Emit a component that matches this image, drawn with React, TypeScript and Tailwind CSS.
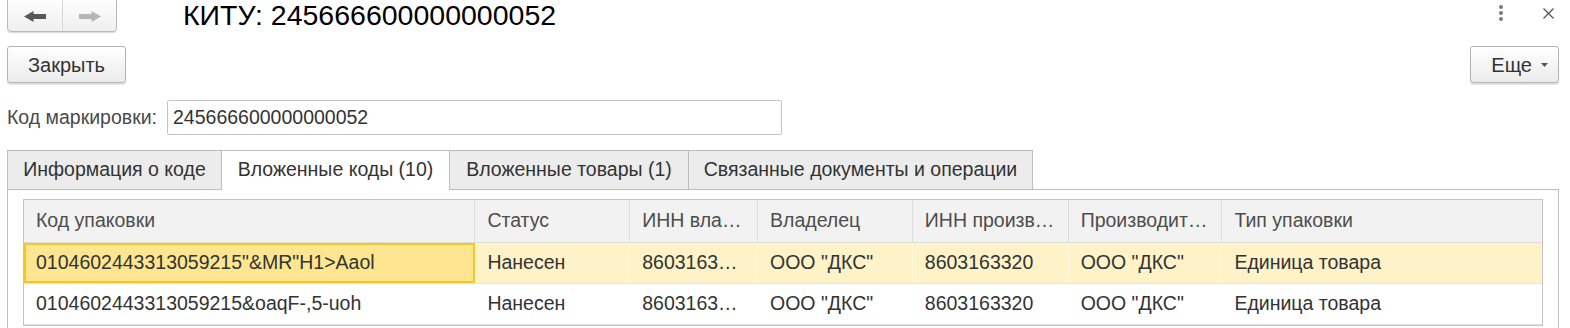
import React from "react";

const cols = [
  { title: "Код упаковки", w: 452 },
  { title: "Статус", w: 155 },
  { title: "ИНН вла…", w: 128 },
  { title: "Владелец", w: 155 },
  { title: "ИНН произв…", w: 156 },
  { title: "Производит…", w: 154 },
  { title: "Тип упаковки", w: 320 },
];

const rows = [
  ["0104602443313059215\"&MR\"H1>Aaol", "Нанесен", "8603163…", "ООО \"ДКС\"", "8603163320", "ООО \"ДКС\"", "Единица товара"],
  ["0104602443313059215&oaqF-,5-uoh", "Нанесен", "8603163…", "ООО \"ДКС\"", "8603163320", "ООО \"ДКС\"", "Единица товара"],
];

function ArrowLeft({ color }: { color: string }) {
  return (
    <svg width="22" height="11" viewBox="0 0 22 11">
      <path d="M0 5.5 L9.5 0 L9.5 3 L22 3 L22 8 L9.5 8 L9.5 11 Z" fill={color} />
    </svg>
  );
}
function ArrowRight({ color }: { color: string }) {
  return (
    <svg width="22" height="11" viewBox="0 0 22 11">
      <path d="M22 5.5 L12.5 0 L12.5 3 L0 3 L0 8 L12.5 8 L12.5 11 Z" fill={color} />
    </svg>
  );
}

export default function App() {
  return (
    <div
      className="w-[1570px] h-[328px] bg-white overflow-hidden text-[#333]"
      style={{ fontFamily: '"Liberation Sans", Arial, sans-serif' }}
    >
      {/* top bar */}
      <div className="flex items-start h-[40px]">
        <div className="ml-[7px] mt-[-3px] flex h-[35px] w-[110px] rounded-b-[4px] border border-[#b9b9b9] bg-gradient-to-b from-white to-[#efefef] shadow-[0_1px_1px_rgba(0,0,0,0.15)]">
          <div className="flex w-[55px] items-center justify-center border-r border-[#d6d6d6] pt-[3px]">
            <ArrowLeft color="#595959" />
          </div>
          <div className="flex flex-1 items-center justify-center pt-[3px]">
            <ArrowRight color="#b5b5b5" />
          </div>
        </div>
        <div className="ml-[66px] text-[28.5px] leading-[30px] text-black whitespace-nowrap">
          КИТУ: 245666600000000052
        </div>
        <div className="flex-1" />
        <div className="mt-[5px] mr-[40px] flex flex-col gap-[2px] items-center">
          <span className="block h-[4px] w-[4px] rounded-full bg-[#7a7a7a]" />
          <span className="block h-[4px] w-[4px] rounded-full bg-[#7a7a7a]" />
          <span className="block h-[4px] w-[4px] rounded-full bg-[#7a7a7a]" />
        </div>
        <div className="mt-[8px] mr-[16px]">
          <svg width="11" height="11" viewBox="0 0 11 11">
            <path d="M0.5 0.5 L10.5 10.5 M10.5 0.5 L0.5 10.5" stroke="#555" strokeWidth="1.3" />
          </svg>
        </div>
      </div>

      {/* command bar */}
      <div className="mt-[6px] flex items-start px-[7px] h-[40px]">
        <button className="h-[37px] w-[119px] rounded-[3px] border border-[#b4b4b4] bg-gradient-to-b from-white to-[#ebebeb] text-[20px] text-[#333] shadow-[0_2px_1px_rgba(0,0,0,0.12)]">
          Закрыть
        </button>
        <div className="flex-1" />
        <button className="mr-[4px] flex h-[37px] w-[89px] items-center justify-end gap-[9px] rounded-[3px] border border-[#b4b4b4] bg-gradient-to-b from-white to-[#ebebeb] pr-[10px] text-[20px] text-[#333] shadow-[0_2px_1px_rgba(0,0,0,0.12)]">
          <span>Еще</span>
          <svg width="7" height="4" viewBox="0 0 7 4">
            <path d="M0 0 L7 0 L3.5 4 Z" fill="#555" />
          </svg>
        </button>
      </div>

      {/* field */}
      <div className="mt-[14px] flex items-center px-[7px]">
        <span className="w-[160px] text-[19.5px] text-[#4a4a4a]">Код маркировки:</span>
        <div className="flex h-[35px] w-[615px] items-center rounded-[2px] border border-[#c4c4c4] pl-[5px] text-[19.5px] text-[#333]">
          245666600000000052
        </div>
      </div>

      {/* tabs */}
      <div className="mt-[15px] px-[7px]">
        <div className="flex h-[39px] items-end whitespace-nowrap">
          <div className="flex h-[39px] w-[215px] items-center justify-center border border-b-0 border-[#bdbdbd] bg-[#ececec] text-[19.5px] text-[#333]">
            Информация о коде
          </div>
          <div className="relative z-10 mb-[-1px] flex h-[40px] w-[228px] items-center justify-center border-t border-r border-[#bdbdbd] bg-white pb-[1px] text-[19.5px] text-[#333]">
            Вложенные коды (10)
          </div>
          <div className="flex h-[39px] w-[239px] items-center justify-center border-t border-r border-[#bdbdbd] bg-[#ececec] text-[19.5px] text-[#333]">
            Вложенные товары (1)
          </div>
          <div className="flex h-[39px] w-[344px] items-center justify-center border-t border-r border-[#bdbdbd] bg-[#ececec] text-[19.5px] text-[#333]">
            Связанные документы и операции
          </div>
        </div>
        <div className="h-[200px] w-[1552px] border border-[#bdbdbd] bg-white pl-[15px] pt-[9px]">
          <div className="w-[1520px] border border-[#c4c4c4]">
            <div className="flex h-[43px] bg-[#f2f2f2] border-b border-[#dcdcdc]">
              {cols.map((c, i) => (
                <div
                  key={i}
                  style={{ width: c.w }}
                  className={
                    "flex items-center pl-[12px] text-[19.5px] text-[#4d4d4d] whitespace-nowrap overflow-hidden " +
                    (i < cols.length - 1 ? "border-r border-[#dcdcdc]" : "")
                  }
                >
                  {c.title}
                </div>
              ))}
            </div>
            {rows.map((r, ri) => (
              <div
                key={ri}
                className={
                  "flex h-[41px] border-b border-[#e4e4e4] " +
                  (ri === 0 ? "bg-[#fdf2c8]" : "bg-white")
                }
              >
                {r.map((cell, ci) => (
                  <div
                    key={ci}
                    style={{ width: cols[ci].w }}
                    className={
                      "flex items-center text-[19.5px] text-[#333] whitespace-nowrap overflow-hidden " +
                      (ri === 0 && ci === 0
                        ? "bg-[#fde68f] border-[2px] border-[#f7c622] pl-[10px]"
                        : "pl-[12px] " + (ri === 0 && ci < r.length - 1 ? "border-r border-[#fff7dc]" : ""))
                    }
                  >
                    {cell}
                  </div>
                ))}
              </div>
            ))}
          </div>
        </div>
      </div>
    </div>
  );
}
